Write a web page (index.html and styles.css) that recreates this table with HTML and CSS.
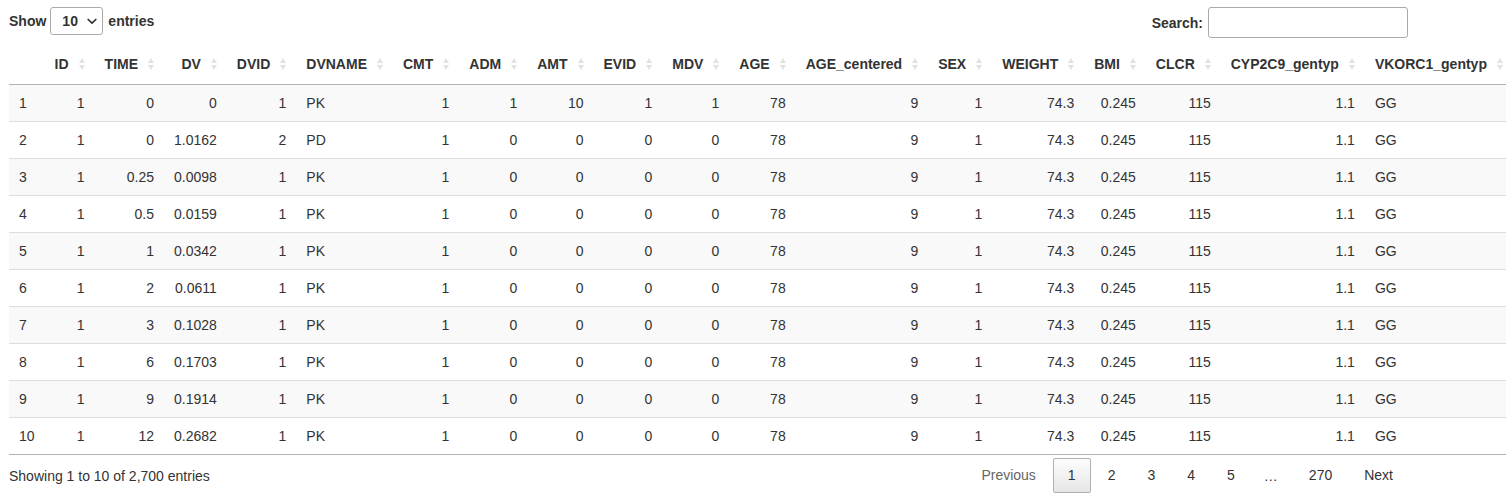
FILE: index.html
```html
<!DOCTYPE html>
<html lang="en">
<head>
<meta charset="utf-8">
<title>Data table</title>
<link rel="stylesheet" href="styles.css">
</head>
<body>
<div class="dt-wrapper">
  <div class="dt-top">
    <div class="dt-length">
      <span class="lbl">Show</span>
      <span class="select-wrap">
        <select class="len-select" aria-label="entries">
          <option>10</option>
          <option>25</option>
          <option>50</option>
          <option>100</option>
        </select>
        <svg class="chev" width="10" height="7" viewBox="0 0 10 7"><polyline points="1.2,1.5 5,5.2 8.8,1.5" fill="none" stroke="#333" stroke-width="1.7" stroke-linecap="round" stroke-linejoin="round"/></svg>
      </span>
      <span class="lbl">entries</span>
    </div>
    <div class="dt-filter">
      <label class="lbl" for="q">Search:</label>
      <input id="q" class="search" type="search">
    </div>
  </div>

  <table class="dt">
    <thead>
      <tr>
        <th class="idx"></th>
        <th class="s num">ID</th>
        <th class="s num">TIME</th>
        <th class="s num">DV</th>
        <th class="s num">DVID</th>
        <th class="s">DVNAME</th>
        <th class="s num">CMT</th>
        <th class="s num">ADM</th>
        <th class="s num">AMT</th>
        <th class="s num">EVID</th>
        <th class="s num">MDV</th>
        <th class="s num">AGE</th>
        <th class="s num">AGE_centered</th>
        <th class="s num">SEX</th>
        <th class="s num">WEIGHT</th>
        <th class="s num">BMI</th>
        <th class="s num">CLCR</th>
        <th class="s num">CYP2C9_gentyp</th>
        <th class="s">VKORC1_gentyp</th>
      </tr>
    </thead>
    <tbody>
      <tr><td>1</td><td class="num">1</td><td class="num">0</td><td class="num">0</td><td class="num">1</td><td>PK</td><td class="num">1</td><td class="num">1</td><td class="num">10</td><td class="num">1</td><td class="num">1</td><td class="num">78</td><td class="num">9</td><td class="num">1</td><td class="num">74.3</td><td class="num">0.245</td><td class="num">115</td><td class="num">1.1</td><td>GG</td></tr>
      <tr><td>2</td><td class="num">1</td><td class="num">0</td><td class="num">1.0162</td><td class="num">2</td><td>PD</td><td class="num">1</td><td class="num">0</td><td class="num">0</td><td class="num">0</td><td class="num">0</td><td class="num">78</td><td class="num">9</td><td class="num">1</td><td class="num">74.3</td><td class="num">0.245</td><td class="num">115</td><td class="num">1.1</td><td>GG</td></tr>
      <tr><td>3</td><td class="num">1</td><td class="num">0.25</td><td class="num">0.0098</td><td class="num">1</td><td>PK</td><td class="num">1</td><td class="num">0</td><td class="num">0</td><td class="num">0</td><td class="num">0</td><td class="num">78</td><td class="num">9</td><td class="num">1</td><td class="num">74.3</td><td class="num">0.245</td><td class="num">115</td><td class="num">1.1</td><td>GG</td></tr>
      <tr><td>4</td><td class="num">1</td><td class="num">0.5</td><td class="num">0.0159</td><td class="num">1</td><td>PK</td><td class="num">1</td><td class="num">0</td><td class="num">0</td><td class="num">0</td><td class="num">0</td><td class="num">78</td><td class="num">9</td><td class="num">1</td><td class="num">74.3</td><td class="num">0.245</td><td class="num">115</td><td class="num">1.1</td><td>GG</td></tr>
      <tr><td>5</td><td class="num">1</td><td class="num">1</td><td class="num">0.0342</td><td class="num">1</td><td>PK</td><td class="num">1</td><td class="num">0</td><td class="num">0</td><td class="num">0</td><td class="num">0</td><td class="num">78</td><td class="num">9</td><td class="num">1</td><td class="num">74.3</td><td class="num">0.245</td><td class="num">115</td><td class="num">1.1</td><td>GG</td></tr>
      <tr><td>6</td><td class="num">1</td><td class="num">2</td><td class="num">0.0611</td><td class="num">1</td><td>PK</td><td class="num">1</td><td class="num">0</td><td class="num">0</td><td class="num">0</td><td class="num">0</td><td class="num">78</td><td class="num">9</td><td class="num">1</td><td class="num">74.3</td><td class="num">0.245</td><td class="num">115</td><td class="num">1.1</td><td>GG</td></tr>
      <tr><td>7</td><td class="num">1</td><td class="num">3</td><td class="num">0.1028</td><td class="num">1</td><td>PK</td><td class="num">1</td><td class="num">0</td><td class="num">0</td><td class="num">0</td><td class="num">0</td><td class="num">78</td><td class="num">9</td><td class="num">1</td><td class="num">74.3</td><td class="num">0.245</td><td class="num">115</td><td class="num">1.1</td><td>GG</td></tr>
      <tr><td>8</td><td class="num">1</td><td class="num">6</td><td class="num">0.1703</td><td class="num">1</td><td>PK</td><td class="num">1</td><td class="num">0</td><td class="num">0</td><td class="num">0</td><td class="num">0</td><td class="num">78</td><td class="num">9</td><td class="num">1</td><td class="num">74.3</td><td class="num">0.245</td><td class="num">115</td><td class="num">1.1</td><td>GG</td></tr>
      <tr><td>9</td><td class="num">1</td><td class="num">9</td><td class="num">0.1914</td><td class="num">1</td><td>PK</td><td class="num">1</td><td class="num">0</td><td class="num">0</td><td class="num">0</td><td class="num">0</td><td class="num">78</td><td class="num">9</td><td class="num">1</td><td class="num">74.3</td><td class="num">0.245</td><td class="num">115</td><td class="num">1.1</td><td>GG</td></tr>
      <tr><td>10</td><td class="num">1</td><td class="num">12</td><td class="num">0.2682</td><td class="num">1</td><td>PK</td><td class="num">1</td><td class="num">0</td><td class="num">0</td><td class="num">0</td><td class="num">0</td><td class="num">78</td><td class="num">9</td><td class="num">1</td><td class="num">74.3</td><td class="num">0.245</td><td class="num">115</td><td class="num">1.1</td><td>GG</td></tr>
    </tbody>
  </table>

  <div class="dt-bottom">
    <div class="dt-info">Showing 1 to 10 of 2,700 entries</div>
    <div class="dt-paginate">
      <a class="pbtn disabled">Previous</a><span class="pages"><a class="pbtn current">1</a><a class="pbtn">2</a><a class="pbtn">3</a><a class="pbtn">4</a><a class="pbtn">5</a><span class="ellipsis">…</span><a class="pbtn">270</a></span><a class="pbtn">Next</a>
    </div>
  </div>
</div>
</body>
</html>
```
FILE: styles.css
```css
html, body {
  overflow-x: hidden;
}
body {
  margin: 7px 0 0 9px;
  background: #fff;
  color: #333;
  font-family: "Liberation Sans", Arial, sans-serif;
  font-size: 14px;
  line-height: 20px;
}
.dt-wrapper {
  width: 1399px;
}
.dt-top {
  display: flex;
  justify-content: space-between;
  align-items: flex-start;
  height: 31px;
}
.lbl {
  font-weight: bold;
}
.dt-length {
  display: flex;
  align-items: center;
  height: 28px;
  gap: 4px;
}
.select-wrap {
  position: relative;
  display: inline-block;
  margin-right: 1px;
}
.len-select {
  -webkit-appearance: none;
  appearance: none;
  display: block;
  box-sizing: border-box;
  width: 53px;
  height: 28px;
  margin: 0;
  padding: 0 0 0 11px;
  border: 1px solid #aaa;
  border-radius: 3px;
  background: #fff;
  color: #333;
  font-family: inherit;
  font-size: 14px;
  font-weight: bold;
}
.chev {
  position: absolute;
  right: 6px;
  top: 11px;
  pointer-events: none;
}
.dt-filter {
  display: flex;
  align-items: center;
  height: 31px;
}
.search {
  box-sizing: border-box;
  width: 200px;
  height: 31px;
  margin: 0 0 0 5px;
  padding: 4px;
  border: 1px solid #aaa;
  border-radius: 3px;
  background: #fff;
  font-family: inherit;
  font-size: 14px;
}
.dt {
  width: 100%;
  margin-top: 6px;
  border-collapse: separate;
  border-spacing: 0;
  border-bottom: 1px solid #b3b3b3;
}
.dt th {
  position: relative;
  padding: 10px;
  text-align: left;
  font-weight: bold;
  color: #333;
  border-bottom: 1px solid #b3b3b3;
  white-space: nowrap;
}
.dt th.s {
  padding-right: 26px;
}
.dt th.s::before,
.dt th.s::after {
  content: "";
  position: absolute;
  right: 10px;
  width: 0;
  height: 0;
  border-left: 3px solid transparent;
  border-right: 3px solid transparent;
}
.dt th.s::before {
  bottom: 21px;
  border-bottom: 5px solid #e2e2e2;
}
.dt th.s::after {
  top: 21px;
  border-top: 5px solid #e2e2e2;
}
.dt th.num,
.dt td.num {
  text-align: right;
}
.dt td {
  padding: 8px 10px;
  border-top: 1px solid #ddd;
  white-space: nowrap;
}
.dt tbody tr:first-child td {
  border-top: none;
}
.dt tbody tr:nth-child(odd) {
  background: #f9f9f9;
}
.dt-bottom {
  display: flex;
  justify-content: space-between;
  align-items: flex-start;
}
.dt-info {
  padding-top: 11px;
}
.dt-paginate {
  padding-top: 3px;
  display: flex;
  align-items: center;
}
.pages {
  display: flex;
  align-items: center;
}
.pbtn {
  box-sizing: border-box;
  display: inline-block;
  min-width: 1.5em;
  padding: 7px 14px;
  margin-left: 2px;
  line-height: 19px;
  text-align: center;
  color: #333;
  border: 1px solid transparent;
  border-radius: 2px;
  cursor: pointer;
}
.pbtn.disabled {
  color: #666;
  cursor: default;
}
.pbtn.current {
  border: 1px solid #b0b0b0;
  background: linear-gradient(to bottom, #fdfdfd 0%, #e6e6e6 100%);
}
.ellipsis {
  padding: 0 14px;
}
```
